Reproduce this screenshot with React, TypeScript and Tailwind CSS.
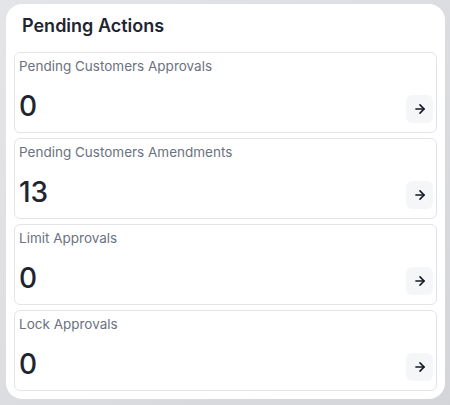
import { ArrowRight } from 'lucide-react';

const ITEMS = [
  { label: 'Pending Customers Approvals', count: 0 },
  { label: 'Pending Customers Amendments', count: 13 },
  { label: 'Limit Approvals', count: 0 },
  { label: 'Lock Approvals', count: 0 },
];

export default function App() {
  return (
    <div
      className="h-[405px] w-[450px] bg-gradient-to-br from-[#e4e5e8] to-[#d3d5d9] pl-[6px] pr-[5px] pt-[4px]"
      style={{ fontFamily: 'Inter, "Noto Sans", sans-serif' }}
    >
      <section className="rounded-2xl bg-white px-2 pb-[8px] pt-[11px]">
        <h2 className="mb-[15px] pl-[8px] text-[18px] font-semibold leading-[22px] text-[#1f2530]">
          Pending Actions
        </h2>
        <div className="flex flex-col gap-[5px]">
          {ITEMS.map((item) => (
            <div
              key={item.label}
              className="h-[81px] rounded-md border border-[#e2e4e8] bg-white pl-[4px] pr-[3px] pt-[4px]"
            >
              <p className="text-[13.5px] leading-[18px] text-[#6b7280]">{item.label}</p>
              <div className="mt-[14px] flex items-center justify-between">
                <span className="text-[28px] font-medium leading-[32px] text-[#1f2530]">{item.count}</span>
                <button
                  type="button"
                  className="mt-[6px] flex h-[28px] w-[27px] items-center justify-center rounded-md bg-[#f5f6f8] text-[#111827]"
                >
                  <ArrowRight size={14} strokeWidth={2.75} />
                </button>
              </div>
            </div>
          ))}
        </div>
      </section>
    </div>
  );
}
